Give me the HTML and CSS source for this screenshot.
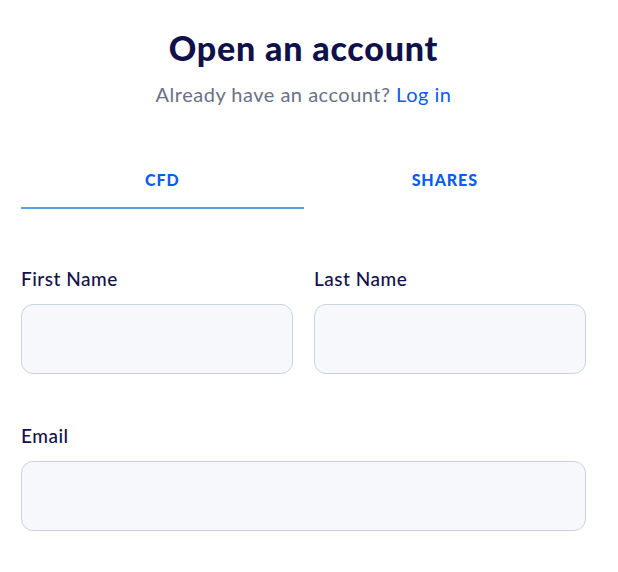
FILE: index.html
```html
<!DOCTYPE html>
<html lang="en">
<head>
<meta charset="utf-8">
<title>Open an account</title>
<link rel="stylesheet" href="styles.css">
</head>
<body>
<main class="page">
  <header class="head">
    <h1 class="title">Open an account</h1>
    <p class="subtitle">Already have an account? <a class="link" href="#">Log in</a></p>
  </header>
  <nav class="tabs">
    <div class="tab tab-active">CFD</div>
    <div class="tab">SHARES</div>
  </nav>
  <form class="form">
    <div class="row">
      <label class="field">
        <span class="label">First Name</span>
        <input class="input" type="text">
      </label>
      <label class="field">
        <span class="label">Last Name</span>
        <input class="input" type="text">
      </label>
    </div>
    <label class="field">
      <span class="label">Email</span>
      <input class="input" type="email">
    </label>
  </form>
</main>
</body>
</html>
```
FILE: styles.css
```css
* { box-sizing: border-box; }
html, body { margin: 0; padding: 0; background: #ffffff; }
body { font-family: Lato, "Noto Sans", sans-serif; }

.page {
  width: 565px;
  margin-left: 21px;
  padding-top: 26px;
}

.head { text-align: center; }
.title {
  margin: 0;
  font-size: 34px;
  line-height: 44px;
  font-weight: 900;
  color: #10104a;
  letter-spacing: 0.8px;
}
.subtitle {
  margin: 12px 0 0;
  font-size: 20px;
  line-height: 24px;
  color: #6b7184;
  letter-spacing: 0.5px;
}
.link { color: #0b5cf0; text-decoration: none; }

.tabs {
  display: flex;
  margin-top: 52px;
}
.tab {
  flex: 1;
  text-align: center;
  font-size: 16px;
  font-weight: 900;
  color: #0b5cf0;
  letter-spacing: 0.9px;
  line-height: 20px;
  padding: 12px 0 17px;
  border-bottom: 2px solid transparent;
}
.tab-active { border-bottom-color: #5a9fe2; }

.form {
  margin-top: 58px;
  display: flex;
  flex-direction: column;
  gap: 50px;
}
.row {
  display: flex;
  gap: 21px;
}
.field {
  flex: 1;
  display: flex;
  flex-direction: column;
  gap: 13px;
}
.label {
  font-size: 19px;
  line-height: 24px;
  font-weight: 500;
  color: #12124a;
  letter-spacing: 0.5px;
}
.input {
  height: 70px;
  width: 100%;
  border: 1px solid #c9d3e2;
  border-radius: 12px;
  background: #f7f8fb;
  font: inherit;
  padding: 0 16px;
}
```
